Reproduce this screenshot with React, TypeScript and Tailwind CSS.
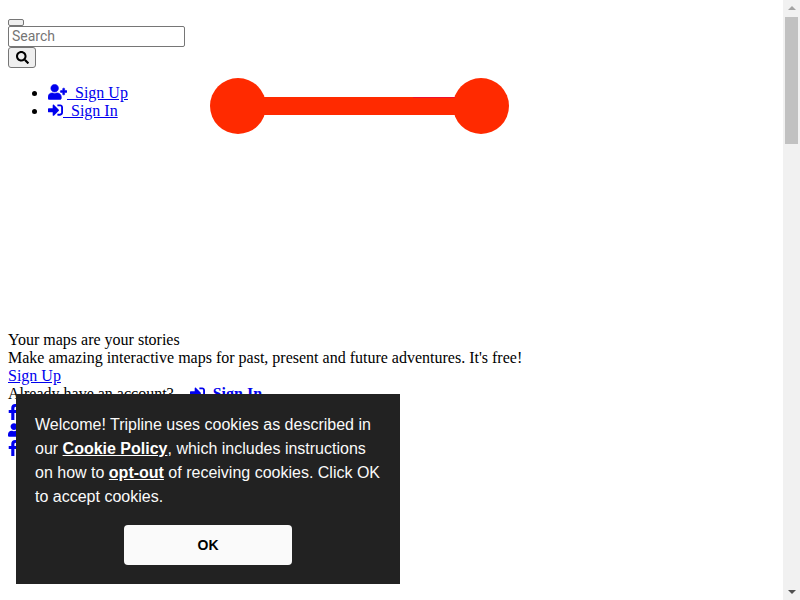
import { FaSearch, FaUserPlus, FaSignInAlt, FaFacebookF, FaUser } from "react-icons/fa"

function RouteLogo() {
  return (
    <svg width="300" height="56" viewBox="0 0 300 56" className="block">
      <circle cx="28" cy="28" r="28" fill="#ff2a00" />
      <circle cx="271" cy="28" r="28" fill="#ff2a00" />
      <rect x="50" y="19" width="200" height="18" fill="#ff2a00" />
      <rect x="203" y="19" width="42" height="1" fill="#f0102a" />
    </svg>
  )
}

export default function App() {
  return (
    <div className="relative h-screen overflow-hidden bg-white font-['Liberation_Serif',serif] text-base leading-[18px] text-black">
      <div className="pl-2 pt-[19px]">
        {/* empty nav toggle */}
        <button className="block h-[7px] w-4 rounded-[2px] border border-[#767676] bg-[#efefef]"></button>
        <input
          placeholder="Search"
          className="block h-[21px] w-[177px] rounded-[2px] border border-[#767676] px-[3px] pb-[2px] font-['Roboto',sans-serif] text-sm placeholder:text-[#757575]"
        />
        <button className="flex h-[21px] w-7 items-center justify-center rounded-[3px] border border-[#767676] bg-[#efefef]">
          <FaSearch className="h-[13px] w-[13px] text-black" />
        </button>
      </div>

      <div className="flex h-[263px] pl-2">
        <ul className="mt-4 w-[202px] list-disc pl-10">
          <li>
            <a href="#" className="whitespace-pre text-[#0000ee] underline">
              <FaUserPlus className="inline h-4 w-[19px] stroke-[20px] align-[-2px]" />
              {"  Sign Up"}
            </a>
          </li>
          <li>
            <a href="#" className="whitespace-pre text-[#0000ee] underline">
              <FaSignInAlt className="inline h-4 w-[15px] align-[-2px]" />
              {"  Sign In"}
            </a>
          </li>
        </ul>
        <div className="mt-[10px]">
          <RouteLogo />
        </div>
      </div>

      <div className="pl-2">
        <div>Your maps are your stories</div>
        <div>Make amazing interactive maps for past, present and future adventures. It's free!</div>
        <a href="#" className="block text-[#0000ee] underline">Sign Up</a>
        <div className="flex">
          <span>Already have an account?</span>
          <a href="#" className="ml-[16px] whitespace-pre font-bold text-[#0000ee] underline">
            <FaSignInAlt className="inline h-4 w-[15px] align-[-2px]" />
            {"  Sign In"}
          </a>
        </div>
        <a href="#" className="block h-[18px] text-[#0000ee]"><FaFacebookF className="h-4 w-[10px] translate-y-px" /></a>
        <a href="#" className="block h-[18px] text-[#0000ee]"><FaUser className="h-4 w-3 translate-y-px" /></a>
        <a href="#" className="block h-[18px] text-[#0000ee]"><FaFacebookF className="h-4 w-[10px] translate-y-px" /></a>
      </div>

      {/* cookie notice */}
      <div className="absolute left-4 top-[394px] h-[190px] w-[384px] bg-[#222222] pl-[19px] pr-[15px] pt-[19px] font-['Liberation_Sans',sans-serif] text-base leading-6 text-[#fafafa]">
        <p>
          Welcome! Tripline uses cookies as described in our{" "}
          <a href="#" className="font-bold text-white underline">Cookie Policy</a>, which includes instructions on how to{" "}
          <a href="#" className="font-bold text-white underline">opt-out</a> of receiving cookies. Click OK to accept cookies.
        </p>
        <button className="ml-[89px] mt-4 block h-10 w-[168px] rounded bg-[#fafafa] text-sm font-bold text-black">OK</button>
      </div>

      {/* page scrollbar */}
      <div className="absolute bottom-0 right-0 top-0 flex w-[17px] flex-col items-center justify-between bg-[#f1f1f1]">
        <div className="mt-[6px] h-0 w-0 border-x-4 border-b-4 border-x-transparent border-b-[#a3a3a3]"></div>
        <div className="absolute left-[2px] top-[17px] h-[127px] w-[13px] bg-[#c1c1c1]"></div>
        <div className="mb-[6px] h-0 w-0 border-x-4 border-t-4 border-x-transparent border-t-[#505050]"></div>
      </div>
    </div>
  )
}
